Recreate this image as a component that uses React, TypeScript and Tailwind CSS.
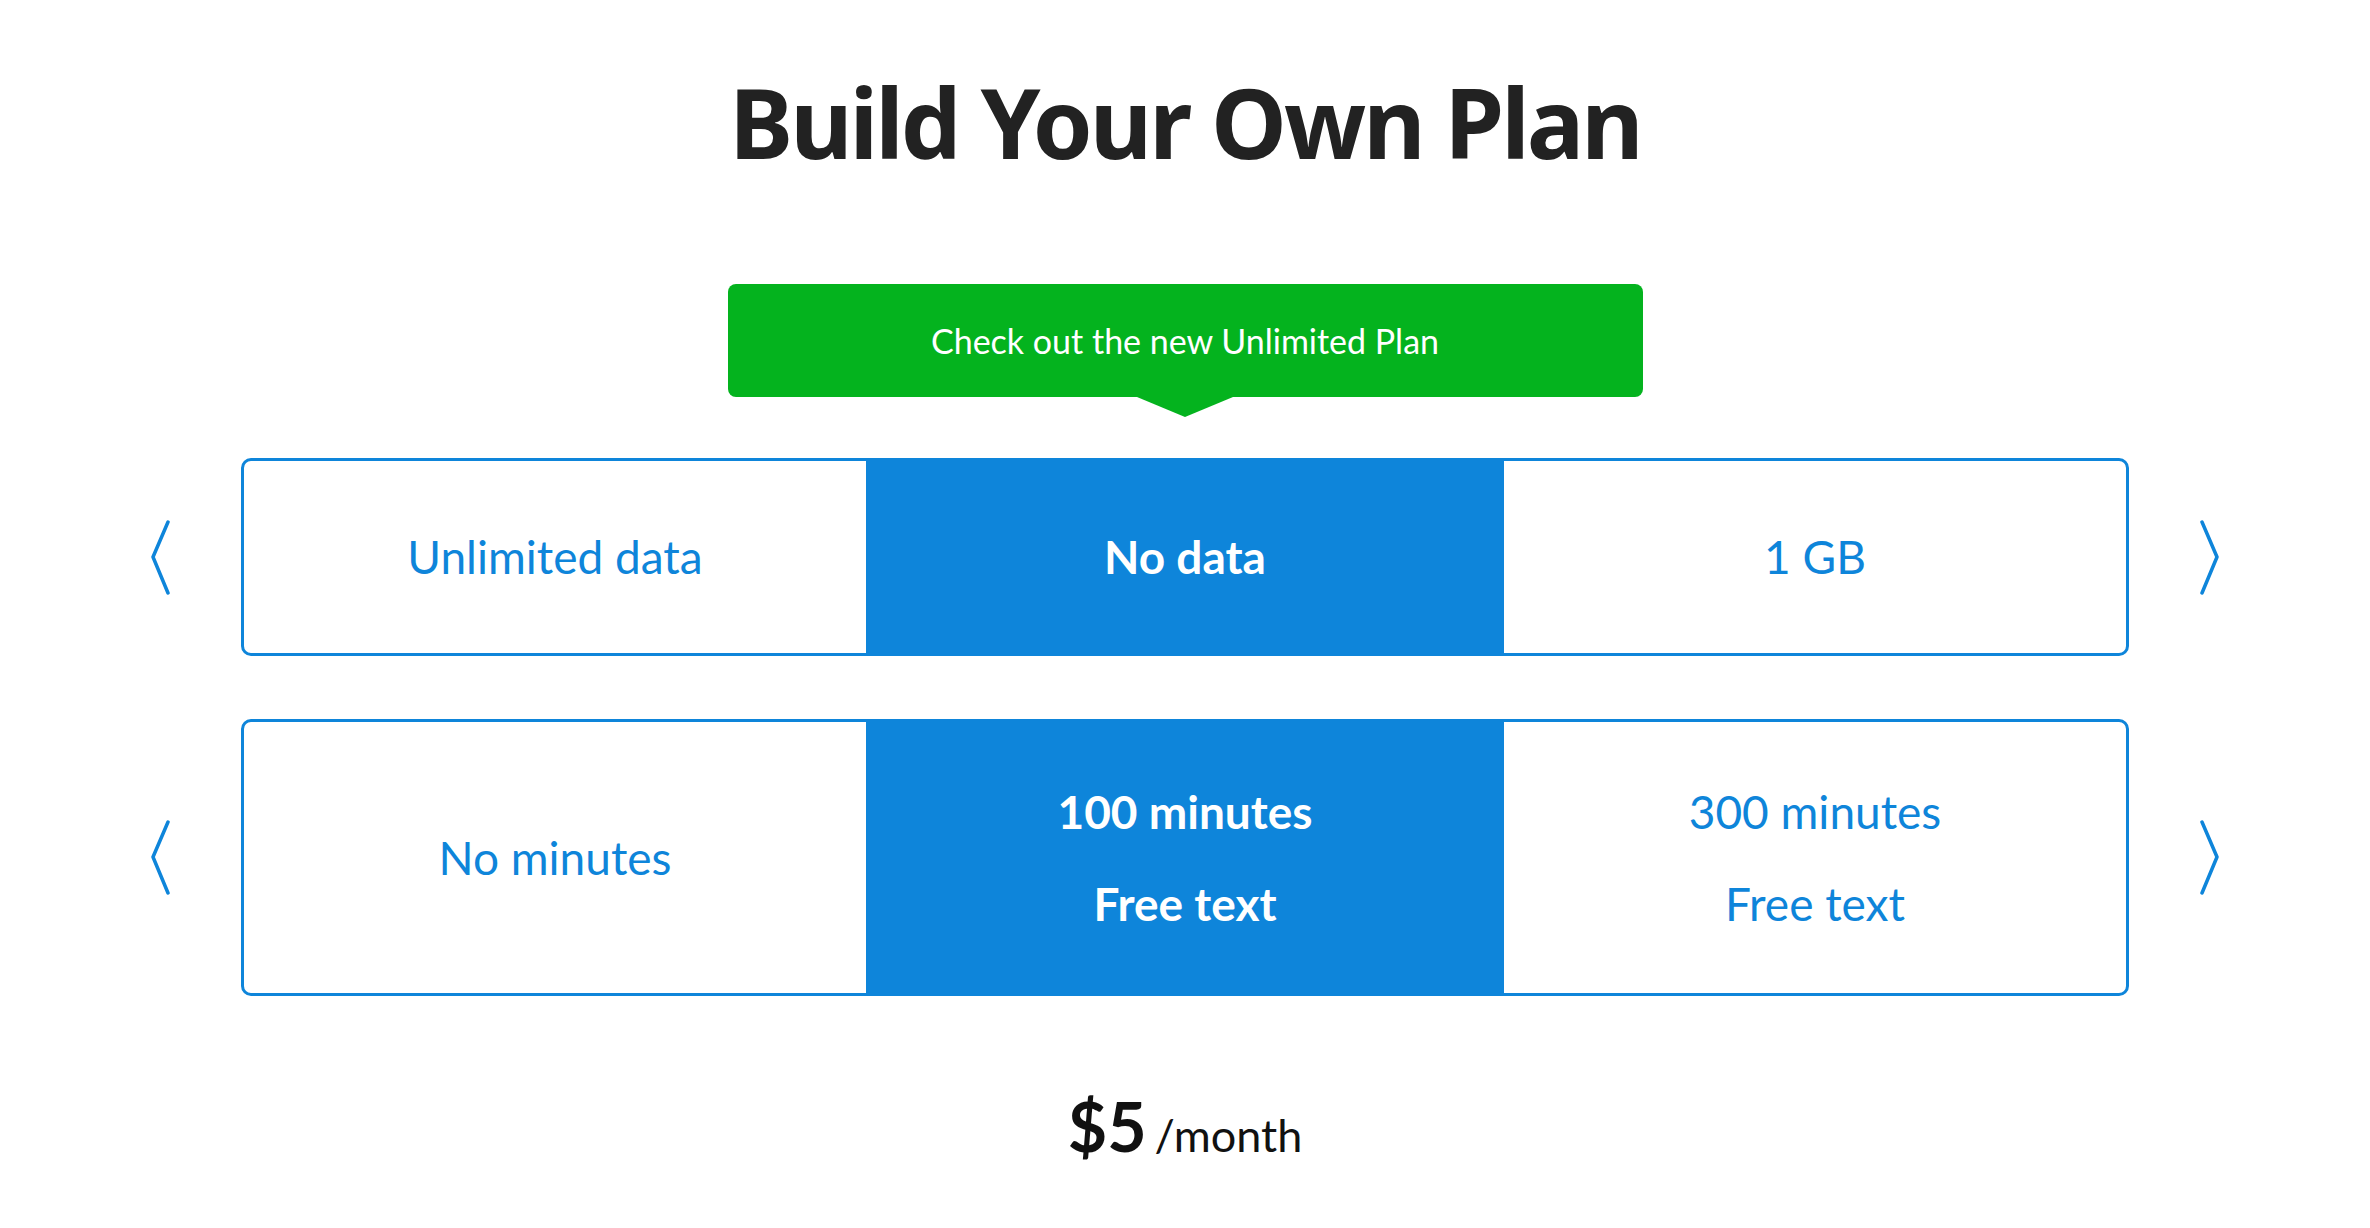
import React from 'react'

const blue = 'text-[#0e85da]'

function Arrow({ dir }: { dir: 'left' | 'right' }) {
  const pts = dir === 'left' ? '18,2 3,37 18,73' : '2,2 17,37 2,73'
  return (
    <svg width="20" height="75" viewBox="0 0 20 75" className="shrink-0">
      <polyline points={pts} fill="none" stroke="#0e85da" strokeWidth="3.5" strokeLinecap="round" strokeLinejoin="round" />
    </svg>
  )
}

function Cell({ lines, active }: { lines: string[]; active?: boolean }) {
  return (
    <div className={active ? 'bg-[#0e85da] text-white font-bold flex flex-col items-center justify-center gap-[42px]' : `${blue} flex flex-col items-center justify-center gap-[42px]`}>
      {lines.map(l => (
        <span key={l} className="leading-[50px]">{l}</span>
      ))}
    </div>
  )
}

function Row({ cells, height }: { cells: string[][]; height: string }) {
  return (
    <div className="flex items-center gap-[71px]">
      <Arrow dir="left" />
      <div className={`grid grid-cols-[1fr_638px_1fr] w-[1888px] ${height} border-[3px] border-[#0e85da] rounded-[10px] overflow-hidden text-[46px]`}>
        <Cell lines={cells[0]} />
        <Cell lines={cells[1]} active />
        <Cell lines={cells[2]} />
      </div>
      <Arrow dir="right" />
    </div>
  )
}

export default function App() {
  return (
    <main className="min-h-screen bg-white flex flex-col items-center font-['Lato','Liberation_Sans',sans-serif]">
      <h1 className="mt-[74px] text-[96px] leading-none font-bold tracking-[-3px] text-[#222] font-['Noto_Sans','Liberation_Sans',sans-serif]">
        Build Your Own Plan
      </h1>

      <div className="relative mt-[114px] w-[915px] h-[113px] bg-[#04b31e] rounded-[8px] flex items-center justify-center">
        <span className="text-white text-[34px]">Check out the new Unlimited Plan</span>
        <div className="absolute left-1/2 -translate-x-1/2 top-full w-0 h-0 border-l-[48px] border-r-[48px] border-t-[20px] border-l-transparent border-r-transparent border-t-[#04b31e]" />
      </div>

      <div className="mt-[61px]">
        <Row height="h-[198px]" cells={[['Unlimited data'], ['No data'], ['1 GB']]} />
      </div>
      <div className="mt-[63px]">
        <Row height="h-[277px]" cells={[['No minutes'], ['100 minutes', 'Free text'], ['300 minutes', 'Free text']]} />
      </div>

      <div className="mt-[96px] flex items-baseline gap-[8px] text-[#111]">
        <span className="text-[68px] font-bold leading-none">$5</span>
        <span className="text-[45px] leading-none">/month</span>
      </div>
    </main>
  )
}
